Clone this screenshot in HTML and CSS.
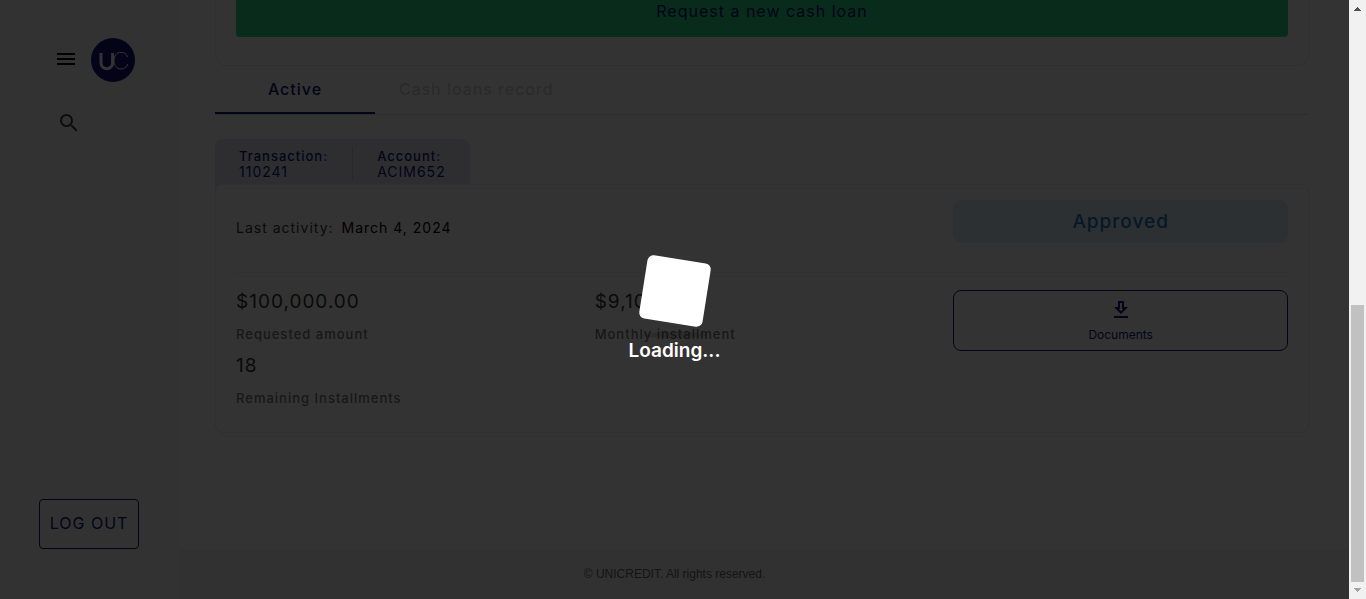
FILE: index.html
```html
<!DOCTYPE html>
<html lang="en">
<head>
<meta charset="utf-8">
<meta name="viewport" content="width=device-width, initial-scale=1">
<title>Unicredit</title>
<link rel="stylesheet" href="styles.css">
</head>
<body>
<div class="window">
  <div class="page">
    <aside class="sidebar">
      <div class="brand">
        <button class="icon-button" type="button" aria-label="Menu">
          <svg width="24" height="24" viewBox="0 0 24 24" fill="currentColor"><path d="M3 18h18v-2H3v2zm0-5h18v-2H3v2zm0-7v2h18V6H3z"/></svg>
        </button>
        <svg class="logo" width="44" height="44" viewBox="0 0 44 44" fill="none" stroke="#fff">
          <circle cx="22" cy="22" r="22" fill="#14147f" stroke="none"/>
          <path stroke-width="3" d="M10 15v9.500c0 8.200 11.600 8.200 11.600 0V15"/>
          <path stroke-width="1" d="M36.500 19c-1-3.200-3.500-4.600-6.500-4.600-4.500 0-7 3.500-7 8.300s2.500 8.300 7 8.300c3.500 0 6-2 6.600-5"/>
        </svg>
      </div>
      <button class="icon-button search" type="button" aria-label="Search">
        <svg width="24" height="24" viewBox="0 0 24 24" fill="currentColor"><path d="M15.500 14h-.79l-.28-.27C15.410 12.590 16 11.110 16 9.500 16 5.910 13.090 3 9.500 3S3 5.910 3 9.500 5.910 16 9.500 16c1.610 0 3.090-.59 4.230-1.570l.27.28v.79l5 4.990L20.490 19l-4.990-5zm-6 0C7.010 14 5 11.990 5 9.500S7.010 5 9.500 5 14 7.010 14 9.500 11.990 14 9.500 14z"/></svg>
      </button>
      <button class="logout" type="button">LOG OUT</button>
    </aside>

    <main class="content">
      <section class="request">
        <button class="request-button" type="button">Request a new cash loan</button>
      </section>

      <div class="tabs" role="tablist">
        <button class="tab tab-active" role="tab" aria-selected="true" type="button">Active</button>
        <button class="tab tab-record" role="tab" aria-selected="false" type="button">Cash loans record</button>
      </div>

      <section class="loan">
        <div class="loan-tag">
          <div class="tag-item"><b>Transaction:</b><span>110241</span></div>
          <div class="tag-item"><b>Account:</b><span>ACIM652</span></div>
        </div>
        <div class="loan-card">
          <div class="loan-top">
            <p class="activity"><span>Last activity:</span><time datetime="2024-03-04">March 4, 2024</time></p>
            <span class="status">Approved</span>
          </div>
          <div class="loan-details">
            <div>
              <p class="value">$100,000.00</p>
              <p class="label">Requested amount</p>
              <p class="value">18</p>
              <p class="label">Remaining Installments</p>
            </div>
            <div>
              <p class="value">$9,100.00</p>
              <p class="label">Monthly installment</p>
            </div>
            <button class="documents" type="button">
              <svg width="24" height="24" viewBox="0 0 24 24" fill="currentColor"><path d="M19 9h-4V3H9v6H5l7 7 7-7zm-8 2V5h2v6h1.170L12 13.170 9.830 11H11zm-6 7h14v2H5z"/></svg>
              <span>Documents</span>
            </button>
          </div>
        </div>
      </section>
    </main>

    <footer class="footer">© UNICREDIT. All rights reserved.</footer>
  </div>

  <div class="overlay" role="status">
    <div class="loader"><div class="loader-box"></div></div>
    <div class="loader-shadow"></div>
    <p class="loader-text">Loading...</p>
  </div>

  <div class="scrollbar" aria-hidden="true">
    <svg width="7" height="4" viewBox="0 0 7 4" fill="#505050" shape-rendering="crispEdges"><path d="M3 0h1v1h1v1h1v1h1v1H0V3h1V2h1V1h1z"/></svg>
    <div class="track"><div class="thumb"></div></div>
    <svg width="7" height="4" viewBox="0 0 7 4" fill="#a3a3a3" shape-rendering="crispEdges"><path d="M0 0h7v1H6v1H5v1H4v1H3V3H2V2H1V1H0z"/></svg>
  </div>
</div>
</body>
</html>
```

FILE: styles.css
```css
* {
  box-sizing: border-box;
}

body {
  margin: 0;
  font-family: Inter, "Liberation Sans", sans-serif;
  letter-spacing: 1px;
  color: #333;
  background: #fff;
}

p {
  margin: 0;
}

button {
  font: inherit;
  letter-spacing: inherit;
  color: #14147f;
  background: none;
  border: 0;
  padding: 0;
  cursor: pointer;
}

svg {
  display: block;
}

.window {
  display: grid;
  grid-template-columns: 1fr 17px;
  height: 100vh;
  overflow: hidden;
}

.page {
  grid-area: 1 / 1;
  display: grid;
  grid-template-columns: 178px 1fr;
  grid-template-rows: 1fr auto;
  min-height: 0;
  overflow: hidden;
}

/* Sidebar */
.sidebar {
  grid-area: 1 / 1 / 3 / 2;
  z-index: 1;
  display: flex;
  flex-direction: column;
  align-items: flex-start;
  padding: 38px 39px 50px;
  background: #fafafa;
}

.brand {
  display: flex;
  align-items: center;
  gap: 13px;
  padding-left: 15px;
}

.icon-button {
  color: #000;
}

.brand .icon-button {
  padding-bottom: 2px;
}

.search {
  margin: 29px 0 0 18px;
  color: #444;
}

.logout {
  width: 100px;
  height: 50px;
  margin-top: auto;
  padding-bottom: 2px;
  font-size: 16px;
  border: 1px solid #14147f;
  border-radius: 4px;
}

/* Content */
.content {
  grid-area: 1 / 2;
  min-height: 0;
  padding: 0 40px 0 37px;
}

.request {
  margin-top: -14px;
  padding: 0 20px 28px;
  border: 1px solid #ebebeb;
  border-top: 0;
  border-radius: 0 0 12px 12px;
}

.request-button {
  width: 100%;
  height: 51px;
  padding-bottom: 2px;
  font-size: 16px;
  background: #2dd787;
  border-radius: 4px;
}

.tabs {
  display: flex;
  height: 49px;
  border-bottom: 1px solid #e0e0e0;
}

.tab {
  font-size: 16px;
}

.tab-active {
  width: 160px;
  font-weight: 500;
  border-bottom: 2px solid #14147f;
}

.tab-record {
  padding: 0 24px 2px;
  color: #ccc;
}

.loan {
  margin-top: 24px;
}

.loan-tag {
  display: flex;
  width: fit-content;
  margin-bottom: -8px;
  padding: 7px 0 12px;
  background: #e6e6f0;
  border-radius: 8px 8px 0 0;
}

.tag-item {
  display: flex;
  flex-direction: column;
  padding: 3px 24px 1px;
  font-size: 14px;
  line-height: 15px;
  color: #14147f;
}

.tag-item + .tag-item {
  border-left: 1px solid #c8c8d8;
}

.tag-item b {
  font-size: 13px;
  font-weight: 500;
}

.loan-card {
  padding: 15px 20px 18px;
  background: #fff;
  border: 1px solid #ebebeb;
  border-radius: 8px;
}

.loan-top,
.loan-details {
  display: grid;
  grid-template-columns: repeat(3, 1fr);
  column-gap: 24px;
}

.loan-top {
  padding-bottom: 29px;
  border-bottom: 1px solid #f0f0f0;
}

.activity {
  grid-column: span 2;
  display: flex;
  gap: 8px;
  align-self: end;
  padding-bottom: 7px;
  font-size: 14px;
  color: #333;
}

.activity time {
  color: #000;
}

.status {
  font-size: 19px;
  font-weight: 500;
  line-height: 43px;
  text-align: center;
  color: #1f78c1;
  background: #dff0fa;
  border-radius: 8px;
}

.loan-details {
  align-items: start;
  padding-top: 13px;
}

.value,
.label {
  line-height: 32px;
}

.value {
  font-size: 19px;
}

.label {
  font-size: 13px;
  font-weight: 500;
  color: #777;
}

.documents {
  display: flex;
  flex-direction: column;
  align-items: center;
  gap: 5px;
  height: 61px;
  margin-top: 4px;
  padding-top: 7px;
  font-size: 12px;
  letter-spacing: 0;
  border: 1px solid #14147f;
  border-radius: 8px;
}

.footer {
  grid-area: 2 / 1 / 3 / 3;
  font: 12px/50px "Liberation Sans", Arial, sans-serif;
  letter-spacing: 0;
  text-align: center;
  color: #666;
  background: #f5f5f5;
}

/* Loading overlay */
.overlay {
  grid-area: 1 / 1;
  z-index: 2;
  display: flex;
  flex-direction: column;
  align-items: center;
  justify-content: center;
  padding-top: 24px;
  background: rgba(0, 0, 0, 0.8);
}

.loader-box {
  width: 64px;
  height: 64px;
  background: #fff;
  border-radius: 6px;
  transform: rotate(9deg);
}

.loader-shadow {
  width: 64px;
  height: 6px;
  margin-top: 9px;
  background: rgba(0, 0, 0, 0.12);
  border-radius: 50%;
}

.loader-text {
  font-size: 19px;
  font-weight: 600;
  line-height: 26px;
  letter-spacing: 0;
  color: #fff;
}

/* Scrollbar */
.scrollbar {
  grid-area: 1 / 2;
  display: flex;
  flex-direction: column;
  align-items: center;
  padding: 7px 0;
  background: #f1f1f1;
}

.track {
  display: flex;
  flex: 1;
  flex-direction: column;
  justify-content: flex-end;
  padding: 6px 0;
}

.thumb {
  width: 13px;
  height: 49%;
  background: #c1c1c1;
}
```
